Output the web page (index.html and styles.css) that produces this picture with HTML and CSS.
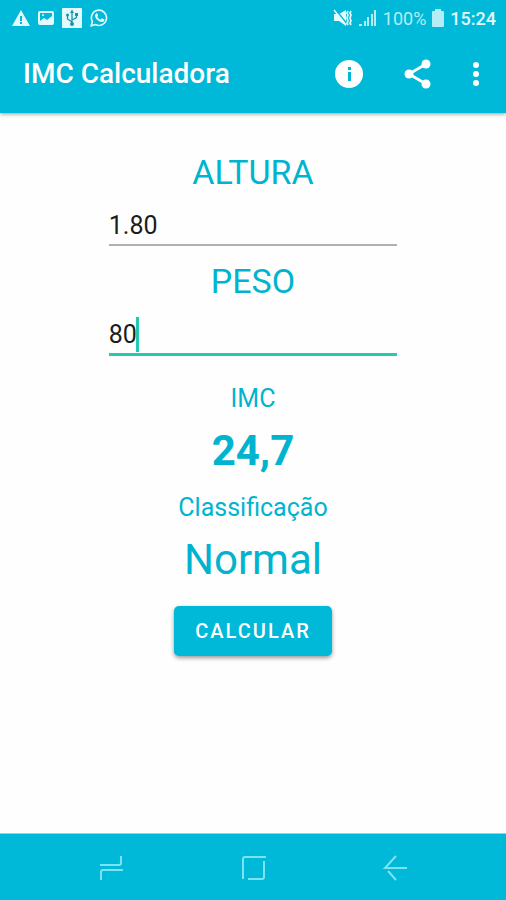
FILE: index.html
```html
<!DOCTYPE html>
<html lang="pt-BR">
<head>
    <meta charset="UTF-8">
    <meta name="viewport" content="width=device-width, initial-scale=1.0">
    <title>IMC Calculadora</title>
    <link rel="stylesheet" href="styles.css">
</head>
<body>

<header class="top">
    <div class="status-bar">
        <div class="status-left">
            <svg width="18" height="18" viewBox="0 0 18 18"><path fill="currentColor" fill-rule="evenodd" d="M9 1L18 17H0zM8 7v5h2V7zM8 13v2h2v-2z"/></svg>
            <svg width="16" height="16" viewBox="0 0 16 16"><path fill="currentColor" fill-rule="evenodd" d="M2 1h12a2 2 0 0 1 2 2v10a2 2 0 0 1-2 2H2a2 2 0 0 1-2-2V3a2 2 0 0 1 2-2zM2 3v8l4-3 3 2 5-4V3z"/><circle cx="5" cy="5" r="1" fill="currentColor"/></svg>
            <svg width="20" height="20" viewBox="0 0 20 20"><rect width="20" height="20" rx="1" fill="currentColor"/><g fill="none" stroke="#1795ae" stroke-width="1.3"><path d="M10 4v12M10 14L5.500 11V7M10 12l4.500-2.500V6"/></g><g fill="#1795ae"><path d="M10 1.500L12 5H8z"/><circle cx="10" cy="16" r="2"/><circle cx="5.500" cy="7" r="1.500"/><path d="M13 5h3v3h-3z"/></g></svg>
            <svg width="18" height="18" viewBox="0 0 18 18"><path fill="none" stroke="currentColor" stroke-width="1.600" d="M1.200 16.800l1.200-4.200a7.600 7.600 0 1 1 3 2.900z"/><path fill="currentColor" d="M6.200 4.500c.5-.4 1-.3 1.200.2l.7 1.700c.1.500-.4.900-.8 1.400.8 1.400 1.800 2.300 3.200 2.900l1-1.200c.3-.3.500-.3.900-.1l1.700.9c.4.200.3.800.1 1.400-.5 1.100-2 1.500-3.300 1.100-2.600-.8-4.600-2.500-5.700-4.900-.5-1.300-.1-2.600 1-3.400z"/></svg>
        </div>
        <div class="status-right">
            <svg width="20" height="18" viewBox="0 0 20 18"><path fill="currentColor" d="M1 5h5l7-4v16l-7-5H1z"/><path stroke="#00b8d8" stroke-width="1.500" d="M3 1l11 14"/><path stroke="currentColor" stroke-width="1.500" d="M1 1l12 15"/><path fill="none" stroke="currentColor" stroke-width="1.700" d="M15 2l-1 2 1 2-1 3 1 3-1 2 1 2M18 2l-1 2 1 2-1 3 1 3-1 2 1 2"/></svg>
            <svg class="signal" width="18" height="18" viewBox="0 0 18 18"><path fill="currentColor" d="M0 15h3v2H0zM5 12h2v5H5zM8 8h2v9H8zM12 5h2v12h-2zM15 1h2v16h-2z"/></svg>
            <span class="battery-text">100%</span>
            <svg class="battery" width="12" height="18" viewBox="0 0 12 18"><path fill="currentColor" d="M3 0h6v2h2q1 0 1 1v14q0 1-1 1H1q-1 0-1-1V3q0-1 1-1h2z"/></svg>
            <span class="clock">15:24</span>
        </div>
    </div>
    <div class="app-bar">
        <h1 class="app-title">IMC Calculadora</h1>
        <div class="actions">
            <button class="icon-button" type="button" aria-label="Sobre">
                <svg width="30" height="30" viewBox="0 0 30 30"><path fill="currentColor" fill-rule="evenodd" d="M15 1a14 14 0 1 0 0 28 14 14 0 1 0 0-28zM14 8h3v3h-3zM14 13h3v9h-3z"/></svg>
            </button>
            <button class="icon-button" type="button" aria-label="Compartilhar">
                <svg width="30" height="30" viewBox="0 0 30 30"><path fill="none" stroke="currentColor" stroke-width="2.800" d="M23 5L6 15l17 10"/><g fill="currentColor"><circle cx="23" cy="5" r="4.500"/><circle cx="6" cy="15" r="4.500"/><circle cx="23" cy="25" r="4.500"/></g></svg>
            </button>
            <button class="icon-button more" type="button" aria-label="Mais">
                <svg width="8" height="24" viewBox="0 0 8 24"><g fill="currentColor"><circle cx="4" cy="3" r="3"/><circle cx="4" cy="12" r="3"/><circle cx="4" cy="21" r="3"/></g></svg>
            </button>
        </div>
    </div>
</header>

<main class="content">
    <form class="form">
        <label class="label" for="altura">ALTURA</label>
        <div class="field">
            <input class="input" type="text" inputmode="decimal" id="altura" value="1.80">
        </div>
        <label class="label" for="peso">PESO</label>
        <div class="field">
            <input class="input active" type="text" inputmode="decimal" id="peso" value="80">
            <span class="caret"></span>
        </div>
        <p class="caption">IMC</p>
        <output class="value bold" id="imc" for="altura peso">24,7</output>
        <p class="caption">Classificação</p>
        <output class="value" id="classe" for="altura peso">Normal</output>
        <button class="calc" type="button">CALCULAR</button>
    </form>
</main>

<nav class="nav-bar">
    <button class="nav-button" type="button" aria-label="Recentes">
        <svg width="26" height="28" viewBox="0 0 26 28"><path d="M2 12h19q2 0 2-2V3M25 17H5q-2 0-2 2v8"/></svg>
    </button>
    <button class="nav-button" type="button" aria-label="Início">
        <svg width="26" height="28" viewBox="0 0 26 28"><path d="M3 26V6q0-2 2-2h21M24 8v16q0 2-2 2H8"/></svg>
    </button>
    <button class="nav-button" type="button" aria-label="Voltar">
        <svg width="26" height="28" viewBox="0 0 26 28"><path d="M14 3L3 15h22M6 18l8 9"/></svg>
    </button>
</nav>

</body>
</html>
```

FILE: styles.css
```css
* {
    box-sizing: border-box;
}
body {
    display: flex;
    flex-direction: column;
    min-height: 100vh;
    margin: 0;
    background-color: #fefefe;
    color: #00b4d0;
    font-family: Roboto, sans-serif;
}
svg {
    display: block;
}
button {
    border: none;
    font-family: inherit;
    color: #fff;
}
.top {
    background-color: #00b8d8;
    color: #fff;
    box-shadow: 0 1px 4px rgba(0, 0, 0, 0.4);
}
.status-bar {
    display: flex;
    justify-content: space-between;
    align-items: center;
    height: 36px;
    padding: 0 10px 0 12px;
}
.status-left, .status-right {
    display: flex;
    align-items: center;
    color: #e4f9fd;
}
.status-left {
    gap: 8px;
}
.status-right {
    gap: 6px;
    font-size: 18px;
}
.signal, .battery-text, .battery {
    color: #b5edf7;
}
.clock {
    font-weight: 500;
}
/* Toolbar */
.app-bar {
    display: flex;
    justify-content: space-between;
    align-items: center;
    height: 77px;
    padding: 0 20px 2px 23px;
}
.app-title {
    margin: 0;
    font-size: 28px;
    font-weight: 500;
}
.actions {
    display: flex;
    align-items: center;
    gap: 39px;
}
.icon-button {
    padding: 0;
    background: none;
}
.more {
    padding: 0 6px 0 0;
}
/* Form */
.content {
    flex: 1;
    padding-top: 38px;
}
.form {
    display: flex;
    flex-direction: column;
    align-items: center;
    width: 57%;
    margin: 0 auto;
}
.label {
    font-size: 34px;
    line-height: 42px;
}
.field {
    position: relative;
    width: 100%;
    margin: 8px 0 14px;
}
.input {
    width: 100%;
    height: 45px;
    padding: 6px 0 0;
    border: none;
    border-bottom: 2px solid #b0b0b0;
    outline: none;
    background: none;
    color: #1c1c1c;
    font-family: inherit;
    font-size: 25px;
}
.active {
    height: 46px;
    border-bottom: 3px solid #20cbb0;
}
/* Text cursor after the last digit */
.caret {
    position: absolute;
    top: 7px;
    left: 27px;
    width: 3px;
    height: 35px;
    background-color: #20cbb0;
}
.caption {
    margin: 13px 0 0;
    font-size: 25px;
    line-height: 32px;
}
.value {
    margin-top: 8px;
    font-size: 42px;
    line-height: 56px;
}
.bold {
    font-weight: 700;
}
.calc {
    width: 158px;
    height: 50px;
    margin-top: 18px;
    border-radius: 5px;
    background-color: #00b8d8;
    box-shadow: 0 2px 4px rgba(0, 0, 0, 0.4);
    font-size: 20px;
    font-weight: 500;
    letter-spacing: 2px;
}
/* Navigation bar */
.nav-bar {
    display: flex;
    justify-content: center;
    align-items: center;
    gap: 116px;
    height: 67px;
    border-top: 1px solid #7fdbe9;
    background-color: #00b8d8;
}
.nav-button {
    padding: 0;
    background: none;
    color: #7ce3f2;
}
.nav-button path {
    fill: none;
    stroke: currentColor;
    stroke-width: 2;
}
```
